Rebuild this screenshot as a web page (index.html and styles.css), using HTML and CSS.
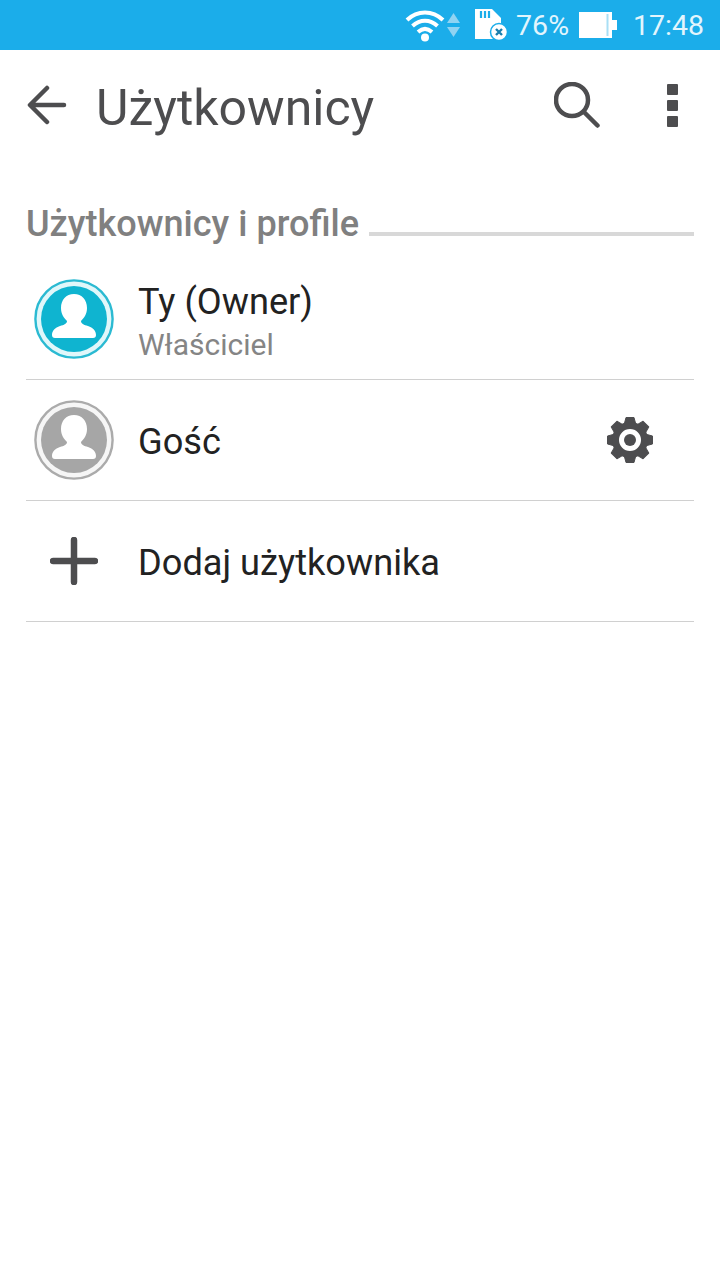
FILE: index.html
```html
<!DOCTYPE html>
<html>
<head>
  <title>Użytkownicy</title>
  <meta name="viewport" content="width=device-width, initial-scale=1.0" />
  <link rel="stylesheet" href="styles.css">
</head>
<body>
  <div class="status-bar">
    <svg class="ic-wifi" width="40" height="34" viewBox="0 0 40 34">
      <path d="M2 12C12.500 2 27.500 2 38 12M7.500 18C15 11 25 11 32.500 18M13 24C17.500 20 22.500 20 27 24" fill="none" stroke="#fff" stroke-width="4"/>
      <circle cx="20" cy="29.500" r="4" fill="#fff"/>
    </svg>
    <svg class="ic-arrows" width="13" height="24" viewBox="0 0 13 24">
      <path d="M6.500 0L13 10H0Z" fill="#8fd3f2"/>
      <path d="M6.500 24L13 14H0Z" fill="#8fd3f2"/>
    </svg>
    <svg class="ic-sd" width="33" height="32" viewBox="0 0 33 32">
      <path d="M0 0H17L26 9V30H0Z" fill="#fff"/>
      <path d="M6 2V9M10 2V9M14 2V9" stroke="#1badea" stroke-width="2.200"/>
      <circle cx="24" cy="23" r="8.500" fill="#fff" stroke="#1badea" stroke-width="1.500"/>
      <path d="M21 20L27 26M27 20L21 26" stroke="#1b7fae" stroke-width="2.400"/>
    </svg>
    <span class="batt-pct">76%</span>
    <svg class="ic-batt" width="38" height="26" viewBox="0 0 38 26">
      <path d="M0 0H33V8H38V18H33V26H0Z" fill="#fff"/>
      <path d="M28.500 2V24" stroke="#a9dff5" stroke-width="2"/>
    </svg>
    <span class="clock">17:48</span>
  </div>

  <div class="toolbar">
    <svg class="ic-back" width="40" height="40" viewBox="0 0 40 40">
      <path d="M37 20H4M20 3L3 20L20 37" fill="none" stroke="#4d4d4f" stroke-width="4.500" stroke-linecap="round" stroke-linejoin="round"/>
    </svg>
    <h1 class="title">Użytkownicy</h1>
    <svg class="ic-search" width="46" height="46" viewBox="0 0 46 46">
      <circle cx="18" cy="18" r="16" fill="none" stroke="#4d4d4f" stroke-width="4.500"/>
      <path d="M30 30L43.500 43.500" stroke="#4d4d4f" stroke-width="4.500" stroke-linecap="round"/>
    </svg>
    <div class="menu-dots"><i></i><i></i><i></i></div>
  </div>

  <div class="section-head">
    <span class="section-name">Użytkownicy i profile</span>
    <span class="section-line"></span>
  </div>

  <div class="row">
    <div class="row-icon">
      <svg width="80" height="80" viewBox="0 0 80 80">
        <circle cx="40" cy="40" r="38.600" fill="#e0f7fa" stroke="#2bbad2" stroke-width="2.400"/>
        <circle cx="40" cy="40" r="33" fill="#0fb4d0"/>
        <path d="M40 15C32 15 27 21 27 29C27 35 30 39 33 42C33 44.500 30 46 26 47C21 48.500 18 52 18 56Q18 59 21 59H59Q62 59 62 56C62 52 59 48.500 54 47C50 46 47 44.500 47 42C50 39 53 35 53 29C53 21 48 15 40 15Z" fill="#fff"/>
      </svg>
    </div>
    <div class="row-text">
      <div class="row-title">Ty (Owner)</div>
      <div class="row-sub">Właściciel</div>
    </div>
  </div>

  <div class="row">
    <div class="row-icon">
      <svg width="80" height="80" viewBox="0 0 80 80">
        <circle cx="40" cy="40" r="38.600" fill="#f6f6f6" stroke="#ababab" stroke-width="2.400"/>
        <circle cx="40" cy="40" r="33" fill="#a6a6a6"/>
        <path d="M40 15C32 15 27 21 27 29C27 35 30 39 33 42C33 44.500 30 46 26 47C21 48.500 18 52 18 56Q18 59 21 59H59Q62 59 62 56C62 52 59 48.500 54 47C50 46 47 44.500 47 42C50 39 53 35 53 29C53 21 48 15 40 15Z" fill="#fff"/>
      </svg>
    </div>
    <div class="row-text">
      <div class="row-title">Gość</div>
    </div>
    <svg class="ic-gear" width="48" height="48" viewBox="0 0 48 48">
      <g fill="#4d4d4f" stroke="#4d4d4f" stroke-width="1" stroke-linejoin="round">
        <path d="M20 1.500H28L30 9H18Z"/>
        <path d="M20 1.500H28L30 9H18Z" transform="rotate(45 24 24)"/>
        <path d="M20 1.500H28L30 9H18Z" transform="rotate(90 24 24)"/>
        <path d="M20 1.500H28L30 9H18Z" transform="rotate(135 24 24)"/>
        <path d="M20 1.500H28L30 9H18Z" transform="rotate(180 24 24)"/>
        <path d="M20 1.500H28L30 9H18Z" transform="rotate(225 24 24)"/>
        <path d="M20 1.500H28L30 9H18Z" transform="rotate(270 24 24)"/>
        <path d="M20 1.500H28L30 9H18Z" transform="rotate(315 24 24)"/>
      </g>
      <circle cx="24" cy="24" r="14.500" fill="none" stroke="#4d4d4f" stroke-width="7"/>
      <circle cx="24" cy="24" r="6" fill="#4d4d4f"/>
    </svg>
  </div>

  <div class="row">
    <div class="row-icon">
      <svg width="48" height="48" viewBox="0 0 48 48">
        <path d="M24 3V45M3 24H45" stroke="#4d4d4f" stroke-width="6.500" stroke-linecap="round"/>
      </svg>
    </div>
    <div class="row-text">
      <div class="row-title">Dodaj użytkownika</div>
    </div>
  </div>
</body>
</html>
```

FILE: styles.css
```css
body { margin: 0; background: #fff; font-family: Roboto, sans-serif; color: #222; }

.status-bar { height: 50px; background: #1badea; color: #e2f5fd; display: flex; align-items: center; justify-content: flex-end; padding-right: 16px; font-size: 28.500px; }
.ic-arrows { margin-left: 2px; }
.ic-sd { margin-left: 15px; }
.batt-pct { margin-left: 8px; }
.ic-batt { margin-left: 10px; }
.clock { margin-left: 16px; }

.toolbar { height: 110px; display: flex; align-items: center; padding: 0 42px 0 27px; }
.title { flex: 1; margin: 5px 0 0 29px; font-size: 50px; font-weight: 400; color: #4d4d4f; }
.ic-search { margin-right: 67px; }
.menu-dots { display: flex; flex-direction: column; gap: 5px; }
.menu-dots i { display: block; width: 11px; height: 11px; background: #4d4d4f; border-radius: 1px; }

.section-head { display: flex; align-items: flex-end; margin: 40px 26px 11px; height: 48px; }
.section-name { font-size: 36.100px; font-weight: 500; color: #808080; line-height: 48px; }
.section-line { flex: 1; height: 4px; background: #d8d8d8; margin: 0 0 12px 10px; }

.row { display: flex; align-items: center; height: 120px; margin: 0 26px; border-bottom: 1px solid #d0d0d0; }
.row-icon { width: 96px; flex: none; display: flex; justify-content: center; margin-right: 16px; }
.row-text { flex: 1; padding-top: 3px; }
.row-title { font-size: 36.200px; color: #222; }
.row-sub { font-size: 30px; color: #858585; margin-top: 4px; }
.ic-gear { margin-right: 40px; }
```
